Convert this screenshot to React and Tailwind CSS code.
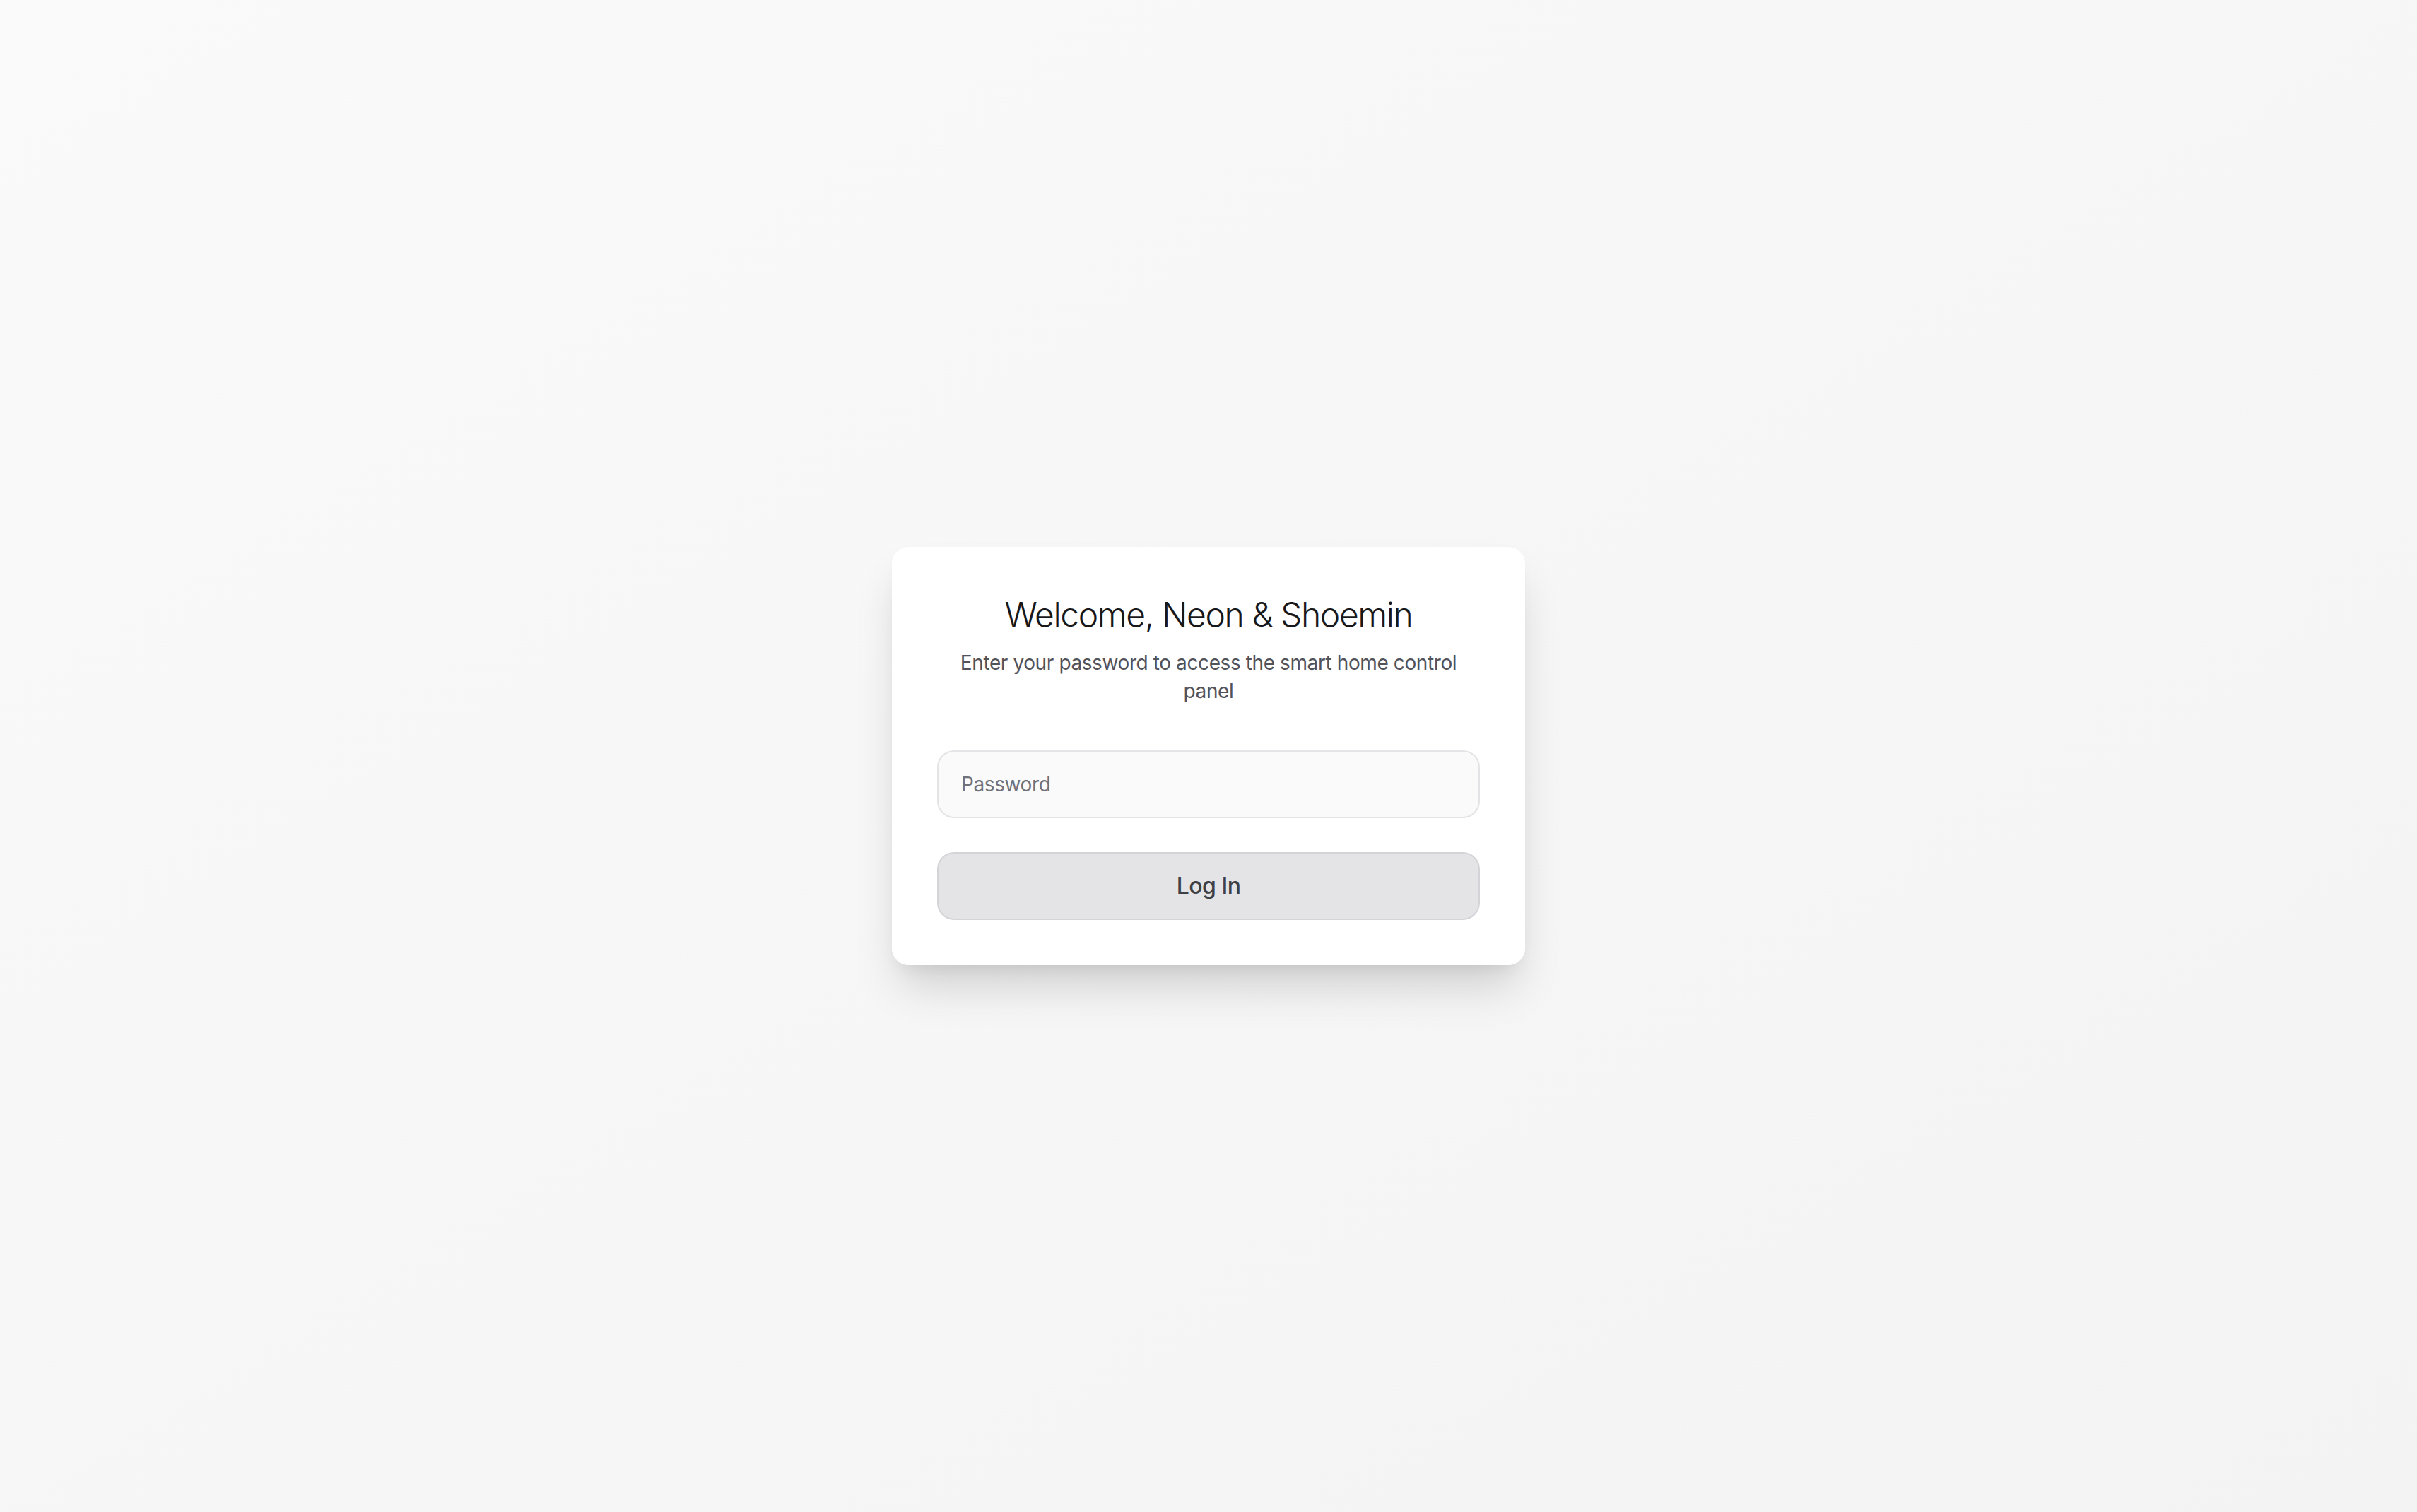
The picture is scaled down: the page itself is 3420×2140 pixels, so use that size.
import { useState } from 'react'

function App() {
  const [password, setPassword] = useState('')

  return (
    <div
      className="min-h-screen w-full flex items-center justify-center bg-linear-to-br from-[#fafafa] to-[#f3f3f3]"
      style={{ fontFamily: 'Inter, "Noto Sans", sans-serif' }}
    >
      {/* Login card */}
      <div className="w-[896px] bg-white/95 rounded-[24px] p-[64px] shadow-[0_40px_64px_-12px_rgba(0,0,0,0.16),0_16px_24px_-12px_rgba(0,0,0,0.08)]">
        <div className="text-center mb-[64px]">
          <h1 className="text-[48px] leading-[64px] font-light text-[#18181b] tracking-[-1.4px]">
            Welcome, Neon &amp; Shoemin
          </h1>
          <p className="mt-[16px] text-[28px] leading-[40px] text-[#52525b] tracking-[-0.4px]">
            Enter your password to access the smart home control panel
          </p>
        </div>

        <form className="flex flex-col gap-[48px]" onSubmit={(e) => e.preventDefault()}>
          <input
            type="password"
            value={password}
            onChange={(e) => setPassword(e.target.value)}
            placeholder="Password"
            className="w-full h-[96px] px-[32px] rounded-[24px] border-2 border-[#e4e4e7] bg-[#fafafa] text-[28px] tracking-[-0.4px] text-[#18181b] placeholder:text-[#71717a] outline-none"
          />
          <button
            type="submit"
            className="w-full h-[96px] rounded-[24px] border-2 border-[#d4d4d8] bg-[#e4e4e7] text-[32px] font-medium tracking-[-0.5px] text-[#3f3f46]"
          >
            Log In
          </button>
        </form>
      </div>
    </div>
  )
}

export default App
